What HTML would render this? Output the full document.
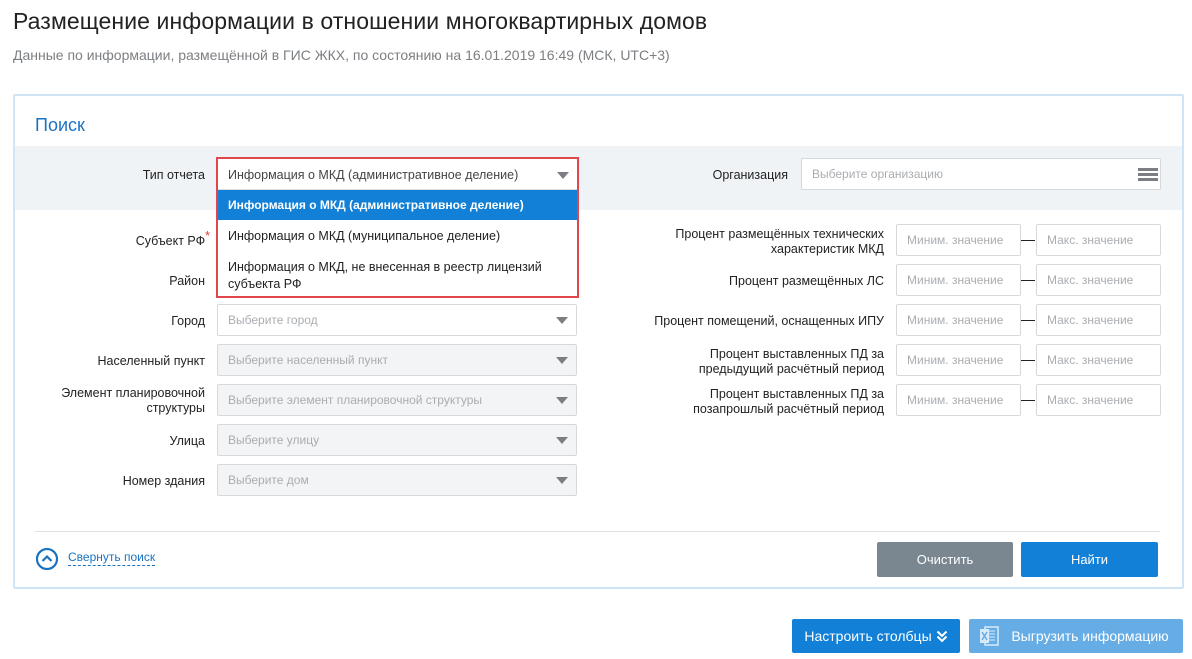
<!DOCTYPE html>
<html><head><meta charset="utf-8"><style>
*{box-sizing:border-box;margin:0;padding:0}
body{width:1192px;height:659px;background:#fff;font-family:"Liberation Sans",Arial,sans-serif;color:#222;position:relative;overflow:hidden;font-size:12.5px}
.a{position:absolute}
.lbl{position:absolute;text-align:right;color:#222;font-size:12.5px;line-height:15px}
.inp{position:absolute;height:32px;border:1px solid #d6d9dc;border-radius:2px;background:#fff;color:#a9adb1;font-size:12px;line-height:31px;padding-left:10px}
.dis{background:#f3f4f6}
.tri{position:absolute;right:8px;top:12px;width:0;height:0;border-left:6px solid transparent;border-right:6px solid transparent;border-top:7px solid #7b7f83}
.dash{position:absolute;width:14px;height:1px;background:#222}
.btn{position:absolute;color:#fff;font-size:13px;text-align:center;border-radius:2px}
</style></head><body>
<div class="a" style="left:13px;top:8px;font-size:23px;color:#222;letter-spacing:0.1px">Размещение информации в отношении многоквартирных домов</div>
<div class="a" style="left:13px;top:47px;font-size:14px;color:#7b7f83">Данные по информации, размещённой в ГИС ЖКХ, по состоянию на 16.01.2019 16:49 (МСК, UTC+3)</div>

<div class="a" style="left:13px;top:94px;width:1171px;height:495px;border:2px solid #cfe4f5;border-radius:2px"></div>
<div class="a" style="left:35px;top:115px;font-size:18px;color:#1a73c2">Поиск</div>
<div class="a" style="left:15px;top:146px;width:1167px;height:64px;background:#f0f3f6"></div>

<div class="lbl" style="right:987px;top:168px">Тип отчета</div>
<div class="lbl" style="right:404px;top:168px">Организация</div>
<div class="inp" style="left:801px;top:158px;width:360px;background:#fff">Выберите организацию
<div class="a" style="right:2px;top:9px;width:20px;height:3px;background:#7b7f83;box-shadow:0 5px 0 #7b7f83,0 10px 0 #7b7f83"></div></div>

<div class="lbl" style="right:982px;top:234px">Субъект РФ<span style="color:#e04040;position:relative;top:-5px">*</span></div>
<div class="lbl" style="right:987px;top:274px">Район</div>
<div class="lbl" style="right:987px;top:314px">Город</div>
<div class="lbl" style="right:987px;top:354px">Населенный пункт</div>
<div class="lbl" style="right:987px;top:386px">Элемент планировочной<br>структуры</div>
<div class="lbl" style="right:987px;top:434px">Улица</div>
<div class="lbl" style="right:987px;top:474px">Номер здания</div>

<div class="inp" style="left:217px;top:224px;width:360px"><div class="tri"></div></div>
<div class="inp" style="left:217px;top:264px;width:360px"><div class="tri"></div></div>
<div class="inp" style="left:217px;top:304px;width:360px">Выберите город<div class="tri"></div></div>
<div class="inp dis" style="left:217px;top:344px;width:360px">Выберите населенный пункт<div class="tri"></div></div>
<div class="inp dis" style="left:217px;top:384px;width:360px">Выберите элемент планировочной структуры<div class="tri"></div></div>
<div class="inp dis" style="left:217px;top:424px;width:360px">Выберите улицу<div class="tri"></div></div>
<div class="inp dis" style="left:217px;top:464px;width:360px">Выберите дом<div class="tri"></div></div>

<div class="a" style="left:216px;top:157px;width:363px;height:141px;border:2px solid #e0474c;background:#fff">
 <div class="a" style="left:0;top:0;width:359px;height:31px;color:#444;font-size:12.5px;line-height:33px;padding-left:10px;border-bottom:1px solid #ddd">Информация о МКД (административное деление)<div class="tri" style="top:13px"></div></div>
 <div class="a" style="left:0;top:31px;width:359px;height:30px;background:#1180d6;color:#fff;font-weight:bold;font-size:12px;line-height:30px;padding-left:10px">Информация о МКД (административное деление)</div>
 <div class="a" style="left:10px;top:70px;font-size:12.5px;color:#222">Информация о МКД (муниципальное деление)</div>
 <div class="a" style="left:10px;top:100px;font-size:12.5px;color:#222;line-height:17px">Информация о МКД, не внесенная в реестр лицензий<br>субъекта РФ</div>
</div>

<div class="lbl" style="right:308px;top:227px">Процент размещённых технических<br>характеристик МКД</div>
<div class="lbl" style="right:308px;top:274px">Процент размещённых ЛС</div>
<div class="lbl" style="right:308px;top:314px">Процент помещений, оснащенных ИПУ</div>
<div class="lbl" style="right:308px;top:347px">Процент выставленных ПД за<br>предыдущий расчётный период</div>
<div class="lbl" style="right:308px;top:387px">Процент выставленных ПД за<br>позапрошлый расчётный период</div>

<div class="inp" style="left:896px;top:224px;width:125px">Миним. значение</div><div class="dash" style="left:1021px;top:240px"></div><div class="inp" style="left:1036px;top:224px;width:125px">Макс. значение</div>
<div class="inp" style="left:896px;top:264px;width:125px">Миним. значение</div><div class="dash" style="left:1021px;top:280px"></div><div class="inp" style="left:1036px;top:264px;width:125px">Макс. значение</div>
<div class="inp" style="left:896px;top:304px;width:125px">Миним. значение</div><div class="dash" style="left:1021px;top:320px"></div><div class="inp" style="left:1036px;top:304px;width:125px">Макс. значение</div>
<div class="inp" style="left:896px;top:344px;width:125px">Миним. значение</div><div class="dash" style="left:1021px;top:360px"></div><div class="inp" style="left:1036px;top:344px;width:125px">Макс. значение</div>
<div class="inp" style="left:896px;top:384px;width:125px">Миним. значение</div><div class="dash" style="left:1021px;top:400px"></div><div class="inp" style="left:1036px;top:384px;width:125px">Макс. значение</div>

<div class="a" style="left:35px;top:531px;width:1125px;height:1px;background:#dde1e5"></div>
<svg class="a" style="left:35px;top:547px" width="24" height="24" viewBox="0 0 24 24"><circle cx="12" cy="12" r="10" fill="none" stroke="#1a73c2" stroke-width="2.2"/><path d="M7.5 14 L12 9.5 L16.5 14" fill="none" stroke="#1a73c2" stroke-width="2.2"/></svg>
<div class="a" style="left:68px;top:550px;font-size:12px;color:#1a73c2;border-bottom:1px dashed #1a73c2;line-height:15px">Свернуть поиск</div>

<div class="btn" style="left:877px;top:542px;width:136px;height:35px;background:#7a8690;line-height:35px">Очистить</div>
<div class="btn" style="left:1021px;top:542px;width:137px;height:35px;background:#1180d6;line-height:35px">Найти</div>

<div class="btn" style="left:792px;top:619px;width:168px;height:34px;background:#1180d6;line-height:34px;font-size:14px;padding-right:16px">Настроить столбцы
<svg class="a" style="right:12px;top:11px" width="12" height="13" viewBox="0 0 12 13"><path d="M1.5 1.5L6 6L10.5 1.5M1.5 6.5L6 11L10.5 6.5" fill="none" stroke="#fff" stroke-width="2"/></svg></div>
<div class="btn" style="left:969px;top:619px;width:214px;height:34px;background:#66ade6;line-height:34px;font-size:14px;padding-left:28px">Выгрузить информацию
<svg class="a" style="left:10px;top:7px" width="20" height="20" viewBox="0 0 20 20"><rect x="6" y="1" width="13" height="18" fill="none" stroke="#d8ebfa" stroke-width="1.5"/><path d="M10 5h6M10 8h6M10 11h6M10 14h6" stroke="#d8ebfa"/><rect x="1" y="3" width="9" height="14" fill="#d8ebfa"/><path d="M3 6l5 8M8 6l-5 8" stroke="#66ade6" stroke-width="1.5"/></svg></div>
</body></html>
